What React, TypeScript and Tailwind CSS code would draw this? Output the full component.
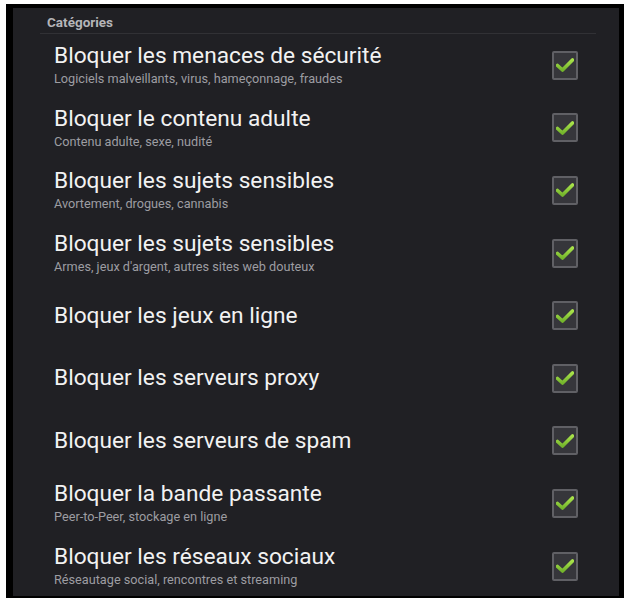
import React from "react";

const items = [
  { title: "Bloquer les menaces de sécurité", sub: "Logiciels malveillants, virus, hameçonnage, fraudes" },
  { title: "Bloquer le contenu adulte", sub: "Contenu adulte, sexe, nudité" },
  { title: "Bloquer les sujets sensibles", sub: "Avortement, drogues, cannabis" },
  { title: "Bloquer les sujets sensibles", sub: "Armes, jeux d'argent, autres sites web douteux" },
  { title: "Bloquer les jeux en ligne" },
  { title: "Bloquer les serveurs proxy" },
  { title: "Bloquer les serveurs de spam" },
  { title: "Bloquer la bande passante", sub: "Peer-to-Peer, stockage en ligne" },
  { title: "Bloquer les réseaux sociaux", sub: "Réseautage social, rencontres et streaming" },
];

const Check = () => (
  <div className="w-[26px] h-[29px] border-2 border-[#606065] bg-[#36363b] rounded-[2px] flex items-center justify-center">
    <svg width="18" height="16" viewBox="0 0 18 16">
      <defs>
        <linearGradient id="g" x1="0" y1="0" x2="0" y2="1">
          <stop offset="0" stopColor="#a8e24a" />
          <stop offset="1" stopColor="#74b52c" />
        </linearGradient>
      </defs>
      <path d="M1.5 8.5 L6.5 13 L16.5 3" fill="none" stroke="url(#g)" strokeWidth="3.6" strokeLinecap="round" strokeLinejoin="round" />
    </svg>
  </div>
);

const App = () => {
  return (
    <div className="h-screen bg-white pt-1 pl-[6px] pr-[5px] pb-[3px] font-['Roboto',sans-serif]">
      <div className="h-full bg-black pt-1 pl-[7px] pr-[5px] pb-[2px]">
        <div className="h-full bg-[#202024] overflow-hidden">
          {/* header */}
          <div className="h-[26px] ml-[27px] mr-[23px] border-b border-[#313135] flex items-end pb-[4px] pl-[7px]">
            <span className="text-[13.5px] font-bold text-[#b5b5b8] leading-none">Catégories</span>
          </div>
          {items.map((it, i) => (
            <div key={i} className="h-[62.6px] flex items-center pl-[41px] pr-[41px]">
              <div className="flex-1 flex flex-col">
                <span className="text-[22.7px] leading-[26px] text-[#f2f2f2]">{it.title}</span>
                {it.sub && (
                  <span className="text-[12.7px] leading-[16px] text-[#9d9da2] mt-[2px]">{it.sub}</span>
                )}
              </div>
              <Check />
            </div>
          ))}
        </div>
      </div>
    </div>
  );
};

export default App;
